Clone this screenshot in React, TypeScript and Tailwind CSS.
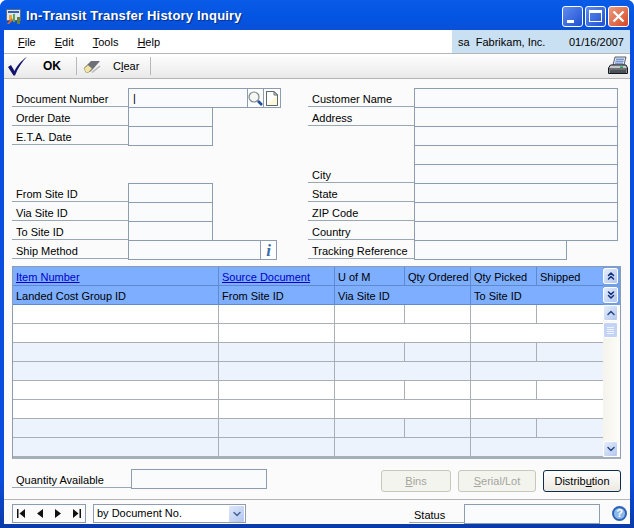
import { ChevronDown, ChevronUp, ChevronsDown, ChevronsUp } from 'lucide-react';

const font = "font-['Liberation_Sans',Arial,sans-serif]";

function Label({ text, width, className = '' }: { text: string; width: string; className?: string }) {
  return (
    <div className={`h-[19px] ${width} shrink-0 whitespace-nowrap border-b border-[#9aa7b5] pl-[4px] text-[11px] leading-[22px] text-black ${className}`}>
      {text}
    </div>
  );
}

function Box({ width, children, className = '' }: { width: string; children?: React.ReactNode; className?: string }) {
  return (
    <div className={`h-[20px] ${width} -mb-px border border-[#8c9db2] bg-[#f9fbfd] ${className}`}>{children}</div>
  );
}

function FieldRow({ label, box }: { label: string; box: string }) {
  return (
    <div className="flex h-[19px]">
      <Label text={label} width="w-[116px]" />
      <Box width={box} />
    </div>
  );
}

function RightRow({ label, box = 'w-[204px]' }: { label: string; box?: string }) {
  return (
    <div className="flex h-[19px]">
      <Label text={label} width="w-[106px]" />
      <Box width={box} />
    </div>
  );
}

function LookupIcon() {
  return (
    <svg width="15" height="15" viewBox="0 0 15 15">
      <circle cx="6" cy="6" r="5" fill="#f4f7f4" stroke="#7b8a8a" strokeWidth="1.2" />
      <path d="M10 10L14 14" stroke="#1f4e9c" strokeWidth="2.6" />
    </svg>
  );
}

function NoteIcon() {
  return (
    <svg width="14" height="15" viewBox="0 0 14 15">
      <path d="M1.5 0.5H9L12.5 4V14.5H1.5Z" fill="#fdf9d8" stroke="#5d6a72" />
      <path d="M1.5 0.5H9V4H12.5L7 9L2 14Z" fill="#ffffff" />
      <path d="M1.5 14.5V0.5H9L12.5 4V14.5H1.5M9 0.5V4H12.5" fill="none" stroke="#5d6a72" />
    </svg>
  );
}

function OkCheck() {
  return (
    <svg width="22" height="20" viewBox="0 0 22 20">
      <path d="M1 11L4 9L7.5 15C10.5 9 14 5 20 0.8C15 6 11 12 8 19.5H6.5Z" fill="#14146e" />
    </svg>
  );
}

function EraserIcon() {
  return (
    <svg width="18" height="15" viewBox="0 0 18 15">
      <path d="M1 9L8 2H17L11 9L7 13H3Z" fill="#6d7078" />
      <path d="M1 9.5L5 6L9 9.5L5.5 13.5H3Z" fill="#f3e6a4" stroke="#9b9469" strokeWidth="0.6" />
      <path d="M9 13.5L17 7" stroke="#b5b5b5" strokeWidth="1.5" />
    </svg>
  );
}

function PrinterIcon() {
  return (
    <svg width="20" height="20" viewBox="0 0 20 20">
      <path d="M7 1H18L16 9H5Z" fill="#dfe8f6" stroke="#2f3b4c" strokeWidth="0.8" />
      <path d="M8 3.2H16M7.5 5.2H15.5M7 7.2H15" stroke="#3f66b5" strokeWidth="0.9" />
      <path d="M2.5 9H18L19.5 12V17.5H0.5V12Z" fill="#c5c9cf" stroke="#14181d" />
      <path d="M1 13H19" stroke="#14181d" />
      <rect x="12" y="10.5" width="3" height="1.5" fill="#1fa84a" />
      <rect x="1.5" y="14" width="17" height="3" fill="#4c5058" />
    </svg>
  );
}

function AppIcon() {
  return (
    <svg width="17" height="17" viewBox="0 0 17 17">
      <rect x="0.5" y="1.5" width="14" height="11" fill="#dbe6f5" stroke="#5a6b85" />
      <rect x="2" y="3" width="11" height="2" fill="#3a5fb0" />
      <rect x="3" y="7" width="3" height="5" fill="#e8a33a" />
      <rect x="7" y="6" width="2" height="8" fill="#5aa84a" />
      <rect x="11" y="9" width="3" height="7" fill="#6a7f3a" />
      <path d="M1 16L6 10L7 12L3 16Z" fill="#e36b2c" />
    </svg>
  );
}

function HelpIcon() {
  return (
    <div className="flex h-[15px] w-[15px] items-center justify-center rounded-full border-2 border-[#2a63b8] bg-[#8fb8ea] text-[11px] font-bold leading-none text-white">
      ?
    </div>
  );
}

function TitleButton({ kind }: { kind: 'min' | 'max' | 'close' }) {
  const bg =
    kind === 'close'
      ? 'bg-gradient-to-br from-[#ec9a7f] to-[#d6451f]'
      : 'bg-gradient-to-br from-[#5f8cf0] to-[#1f4fd0]';
  return (
    <div className={`flex h-[21px] w-[21px] items-center justify-center rounded-[3px] border border-white ${bg}`}>
      {kind === 'min' && <div className="mt-[10px] mr-[5px] h-[3px] w-[7px] bg-white" />}
      {kind === 'max' && <div className="h-[12px] w-[13px] border border-t-[3px] border-white" />}
      {kind === 'close' && (
        <svg width="13" height="13" viewBox="0 0 13 13">
          <path d="M1.5 1.5L11.5 11.5M11.5 1.5L1.5 11.5" stroke="#fff" strokeWidth="2.4" />
        </svg>
      )}
    </div>
  );
}

function GridRow({ split, tint }: { split: boolean; tint: boolean }) {
  const cell = 'h-full border-r border-[#a9afb5]';
  return (
    <div className={`flex h-[19px] border-b border-[#a9afb5] ${tint ? 'bg-[#edf3fc]' : 'bg-white'}`}>
      <div className={`${cell} w-[206px]`} />
      <div className={`${cell} w-[116px]`} />
      {split ? (
        <>
          <div className={`${cell} w-[70px]`} />
          <div className={`${cell} w-[66px]`} />
          <div className={`${cell} w-[66px]`} />
        </>
      ) : (
        <>
          <div className={`${cell} w-[136px]`} />
          <div className="w-[66px]" />
        </>
      )}
    </div>
  );
}

function HeadCell({ text, width, link }: { text: string; width: string; link?: boolean }) {
  return (
    <div
      className={`h-full ${width} shrink-0 whitespace-nowrap border-r border-[#5f8ad0] pl-[3px] text-[11px] leading-[20px] ${
        link ? 'text-[#0000cc] underline' : 'text-black'
      }`}
    >
      {text}
    </div>
  );
}

function ScrollButton({ children }: { children: React.ReactNode }) {
  return (
    <div className="flex h-[16px] w-[15px] items-center justify-center rounded-[2px] border border-white bg-gradient-to-br from-[#e6eefc] to-[#b3c6ee] text-[#2b4a86]">
      {children}
    </div>
  );
}

function GridScrollBar() {
  return (
    <div className="flex w-[17px] flex-col bg-gradient-to-r from-[#f4f3ec] to-[#fdfdf9]">
      <ScrollButton>
        <ChevronUp size={12} strokeWidth={3} />
      </ScrollButton>
      <div className="mt-px flex h-[16px] w-[15px] flex-col items-center justify-center gap-px rounded-[2px] border border-white bg-[#c3d3f5]">
        <div className="h-px w-[7px] bg-[#eef3fd]" />
        <div className="h-px w-[7px] bg-[#eef3fd]" />
        <div className="h-px w-[7px] bg-[#eef3fd]" />
        <div className="h-px w-[7px] bg-[#eef3fd]" />
      </div>
      <div className="flex-1" />
      <ScrollButton>
        <ChevronDown size={12} strokeWidth={3} />
      </ScrollButton>
    </div>
  );
}

function Grid() {
  const rows = [
    { split: true, tint: false },
    { split: false, tint: false },
    { split: true, tint: true },
    { split: false, tint: true },
    { split: true, tint: false },
    { split: false, tint: false },
    { split: true, tint: true },
    { split: false, tint: true },
  ];
  return (
    <div className="mx-[8px] mt-[7px] flex h-[193px] w-[609px] flex-col border border-b-2 border-[#8c9db2] border-b-[#a4afbc]">
      <div className="flex h-[38px] bg-[#7eaeff]">
        <div className="flex w-[590px] flex-col">
          <div className="flex h-[19px] border-b border-[#5f8ad0]">
            <HeadCell text="Item Number" width="w-[206px]" link />
            <HeadCell text="Source Document" width="w-[116px]" link />
            <HeadCell text="U of M" width="w-[70px]" />
            <HeadCell text="Qty Ordered" width="w-[66px]" />
            <HeadCell text="Qty Picked" width="w-[66px]" />
            <div className="pl-[3px] text-[11px] leading-[20px] text-black">Shipped</div>
          </div>
          <div className="flex h-[19px] border-b border-[#5f8ad0]">
            <HeadCell text="Landed Cost Group ID" width="w-[206px]" />
            <HeadCell text="From Site ID" width="w-[116px]" />
            <HeadCell text="Via Site ID" width="w-[136px]" />
            <div className="pl-[3px] text-[11px] leading-[20px] text-black">To Site ID</div>
          </div>
        </div>
        <div className="flex flex-1 flex-col gap-[3px] bg-[#6f9fe6] pt-px">
          <ScrollButton>
            <ChevronsUp size={12} strokeWidth={3} className="text-[#0f2f7a]" />
          </ScrollButton>
          <ScrollButton>
            <ChevronsDown size={12} strokeWidth={3} className="text-[#0f2f7a]" />
          </ScrollButton>
        </div>
      </div>
      <div className="flex flex-1 overflow-hidden">
        <div className="w-[590px] overflow-hidden">
          {rows.map((row, i) => (
            <GridRow key={i} split={row.split} tint={row.tint} />
          ))}
        </div>
        <GridScrollBar />
      </div>
    </div>
  );
}

function ActionButton({ text, hot, disabled }: { text: string; hot: number; disabled?: boolean }) {
  return (
    <div
      className={`flex h-[22px] items-center justify-center rounded-[3px] border text-[11px] ${
        disabled
          ? 'border-[#c9c7ba] bg-[#f4f4ef] text-[#a3a69c]'
          : 'border-[#0f2e4f] bg-gradient-to-b from-white to-[#ece9e0] text-black'
      } ${text === 'Bins' ? 'w-[70px]' : 'w-[78px]'}`}
    >
      {text.slice(0, hot)}
      <span className="underline">{text[hot]}</span>
      {text.slice(hot + 1)}
    </div>
  );
}

function Menu({ text }: { text: string }) {
  return (
    <span>
      <span className="underline">{text[0]}</span>
      {text.slice(1)}
    </span>
  );
}

export default function App() {
  return (
    <div className={`h-[528px] w-[634px] overflow-hidden rounded-t-[7px] bg-gradient-to-b from-[#0a4ee0] from-90% to-[#0a3aa8] ${font}`}>
      {/* title bar */}
      <div className="flex h-[30px] items-center bg-gradient-to-b from-[#0a5be8] via-[#0255e2] to-[#0a50d8] pl-[6px] pr-[5px] pt-[2px]">
        <AppIcon />
        <div className="ml-[3px] flex-1 text-[13px] font-bold tracking-[0.2px] text-white [text-shadow:1px_1px_1px_#0a2a80]">
          In-Transit Transfer History Inquiry
        </div>
        <div className="flex gap-[2px]">
          <TitleButton kind="min" />
          <TitleButton kind="max" />
          <TitleButton kind="close" />
        </div>
      </div>

      <div className="mx-[4px] h-[494px] w-[626px] bg-[#fbfbfb]">
        {/* menu */}
        <div className="flex h-[24px] border-b border-[#b5b5b5] bg-white">
          <div className="flex flex-1 items-center gap-[19px] pl-[14px] pt-[1px] text-[11px] text-black">
            <Menu text="File" />
            <Menu text="Edit" />
            <Menu text="Tools" />
            <Menu text="Help" />
          </div>
          <div className="flex w-[178px] items-center justify-between bg-[#c9dff2] pl-[6px] pr-[6px] pt-[1px] text-[11px] text-black">
            <span>sa&nbsp; Fabrikam, Inc.</span>
            <span>01/16/2007</span>
          </div>
        </div>

        {/* toolbar */}
        <div className="flex h-[25px] items-center border-b border-[#b5b5b5] bg-gradient-to-b from-white to-[#e9e9e9]">
          <div className="ml-[3px] w-[22px]">
            <OkCheck />
          </div>
          <div className="ml-[14px] w-[30px] text-[12px] font-bold text-black">OK</div>
          <div className="ml-[3px] h-[18px] w-px bg-[#b5b8bd]" />
          <div className="ml-[6px]">
            <EraserIcon />
          </div>
          <div className="ml-[12px] w-[37px] text-[11px] text-black">
            C<span className="underline">l</span>ear
          </div>
          <div className="h-[18px] w-px bg-[#b5b8bd]" />
          <div className="ml-auto mr-[2px]">
            <PrinterIcon />
          </div>
        </div>

        {/* header fields */}
        <div className="flex pt-[9px] pl-[8px]">
          <div className="flex w-[296px] flex-col">
            <div className="flex h-[19px]">
              <Label text="Document Number" width="w-[116px]" />
              <Box width="w-[120px]" className="pl-[4px] text-[11px] leading-[18px]">
                |
              </Box>
              <Box width="w-[17px]" className="-ml-px flex items-center justify-center bg-white">
                <LookupIcon />
              </Box>
              <Box width="w-[18px]" className="-ml-px flex items-center justify-center bg-white">
                <NoteIcon />
              </Box>
            </div>
            <FieldRow label="Order Date" box="w-[85px]" />
            <FieldRow label="E.T.A. Date" box="w-[85px]" />
            <div className="h-[38px]" />
            <FieldRow label="From Site ID" box="w-[85px]" />
            <FieldRow label="Via Site ID" box="w-[85px]" />
            <FieldRow label="To Site ID" box="w-[85px]" />
            <div className="flex h-[19px]">
              <Label text="Ship Method" width="w-[116px]" />
              <Box width="w-[133px]" />
              <Box width="w-[17px]" className="-ml-px flex items-center justify-center bg-white">
                <span className="font-['Liberation_Serif',serif] text-[17px] font-bold italic leading-none text-[#3a6ea8]">
                  i
                </span>
              </Box>
            </div>
          </div>
          <div className="flex flex-col">
            <RightRow label="Customer Name" />
            <RightRow label="Address" />
            <div className="ml-[106px] flex h-[19px]">
              <Box width="w-[204px]" />
            </div>
            <div className="ml-[106px] flex h-[19px]">
              <Box width="w-[204px]" />
            </div>
            <RightRow label="City" />
            <RightRow label="State" />
            <RightRow label="ZIP Code" />
            <RightRow label="Country" />
            <RightRow label="Tracking Reference" box="w-[153px]" />
          </div>
        </div>

        <Grid />

        {/* grid footer */}
        <div className="flex h-[40px] items-start pl-[8px] pr-[9px]">
          <div className="mt-[10px] flex h-[19px]">
            <Label text="Quantity Available" width="w-[119px]" />
            <Box width="w-[136px]" />
          </div>
          <div className="mt-[11px] ml-auto flex gap-[7px]">
            <ActionButton text="Bins" hot={0} disabled />
            <ActionButton text="Serial/Lot" hot={0} disabled />
            <ActionButton text="Distribution" hot={7} />
          </div>
        </div>

        {/* status bar */}
        <div className="flex h-[26px] items-start border-t border-[#b5b5b5] pt-[4px] pl-[8px]">
          <div className="flex h-[19px] w-[74px] items-center justify-between border border-[#8c9db2] px-[4px] text-[#111]">
            <svg width="8" height="9" viewBox="0 0 8 9"><path d="M0 0H1.5V9H0ZM8 0V9L2.5 4.5Z" fill="#111" /></svg>
            <svg width="6" height="9" viewBox="0 0 6 9"><path d="M6 0V9L0 4.5Z" fill="#111" /></svg>
            <svg width="6" height="9" viewBox="0 0 6 9"><path d="M0 0V9L6 4.5Z" fill="#111" /></svg>
            <svg width="8" height="9" viewBox="0 0 8 9"><path d="M0 0V9L5.5 4.5ZM6.5 0H8V9H6.5Z" fill="#111" /></svg>
          </div>
          <div className="ml-[7px] flex h-[19px] w-[153px] items-center justify-between border border-[#8c9db2] bg-white pl-[3px] pr-px text-[11px] text-black">
            by Document No.
            <div className="flex h-[16px] w-[15px] items-center justify-center rounded-[1px] bg-gradient-to-br from-[#dfe8fb] to-[#b3c6ee] text-[#4a6496]">
              <ChevronDown size={12} strokeWidth={3} />
            </div>
          </div>
          <div className="ml-[163px] h-[19px] w-[55px] border-b border-[#9aa7b5] pl-[5px] text-[11px] leading-[22px] text-black">
            Status
          </div>
          <Box width="w-[136px]" />
          <div className="ml-[12px] mt-[2px]">
            <HelpIcon />
          </div>
        </div>
      </div>
    </div>
  );
}
